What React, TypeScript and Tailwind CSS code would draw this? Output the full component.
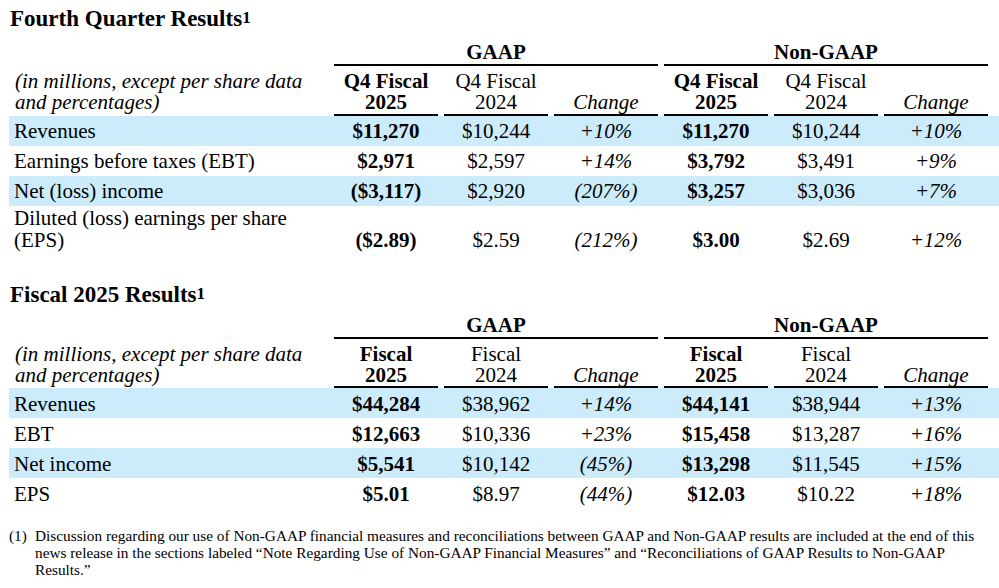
import React from "react";

type Row = {
  label: React.ReactNode;
  cells: string[];
  blue: boolean;
  tall?: boolean;
};

const q4Rows: Row[] = [
  { label: "Revenues", cells: ["$11,270", "$10,244", "+10%", "$11,270", "$10,244", "+10%"], blue: true },
  { label: "Earnings before taxes (EBT)", cells: ["$2,971", "$2,597", "+14%", "$3,792", "$3,491", "+9%"], blue: false },
  { label: "Net (loss) income", cells: ["($3,117)", "$2,920", "(207%)", "$3,257", "$3,036", "+7%"], blue: true },
  {
    label: (
      <>
        Diluted (loss) earnings per share
        <br />
        (EPS)
      </>
    ),
    cells: ["($2.89)", "$2.59", "(212%)", "$3.00", "$2.69", "+12%"],
    blue: false,
    tall: true,
  },
];

const fyRows: Row[] = [
  { label: "Revenues", cells: ["$44,284", "$38,962", "+14%", "$44,141", "$38,944", "+13%"], blue: true },
  { label: "EBT", cells: ["$12,663", "$10,336", "+23%", "$15,458", "$13,287", "+16%"], blue: false },
  { label: "Net income", cells: ["$5,541", "$10,142", "(45%)", "$13,298", "$11,545", "+15%"], blue: true },
  { label: "EPS", cells: ["$5.01", "$8.97", "(44%)", "$12.03", "$10.22", "+18%"], blue: false },
];

const cols = "grid grid-cols-[322px_repeat(6,110px)]";

// bold for current year, italic for change
function cellFont(i: number) {
  if (i === 0 || i === 3) return "font-bold";
  if (i === 2 || i === 5) return "italic";
  return "";
}

function Section({
  title,
  head,
  rows,
  gapTop,
  headH,
  headPb,
  labelPb,
  rowPad,
}: {
  title: string;
  head: string;
  rows: Row[];
  gapTop: string;
  headH: string;
  headPb: string;
  labelPb: string;
  rowPad: string;
}) {
  return (
    <section>
      <h2 className="pl-[1px] text-[23px] font-bold leading-[22px]">
        {title}
        <sup className="-top-[3px] text-[17px]">1</sup>
      </h2>

      {/* GAAP / Non-GAAP */}
      <div className={`${cols} ${gapTop} leading-[21px]`}>
        <div className="col-start-2 col-span-3 mx-[3px] border-b-2 border-black pb-[1px] text-center font-bold">
          GAAP
        </div>
        <div className="col-span-3 mx-[3px] border-b-2 border-black pb-[1px] text-center font-bold">
          Non-GAAP
        </div>
      </div>

      {/* column headers */}
      <div className={`${cols} ${headH} items-end leading-[21px]`}>
        <div className={`pl-[6px] italic ${labelPb}`}>
          (in millions, except per share data
          <br />
          and percentages)
        </div>
        {[0, 1, 2, 3, 4, 5].map((i) => (
          <div
            key={i}
            className={`mx-[3px] border-b-2 border-black text-center ${headPb} ${cellFont(i)}`}
          >
            {i === 2 || i === 5 ? (
              "Change"
            ) : (
              <>
                {head}
                <br />
                {i === 0 || i === 3 ? "2025" : "2024"}
              </>
            )}
          </div>
        ))}
      </div>

      {rows.map((r, idx) => (
        <div
          key={idx}
          className={`${cols} items-end ${
            r.tall ? "pt-[1px] pb-[4px] leading-[22px]" : `${rowPad} leading-[21px]`
          } ${r.blue ? "bg-[#ccebfb]" : ""}`}
        >
          <div className="pl-[5px]">{r.label}</div>
          {r.cells.map((c, i) => (
            <div key={i} className={`text-center ${cellFont(i)}`}>
              {c}
            </div>
          ))}
        </div>
      ))}
    </section>
  );
}

export default function App() {
  return (
    <main className="h-[588px] w-[999px] overflow-hidden bg-white pl-[9px] pt-[8px] font-['Liberation_Serif',serif] text-[21px] text-black">
      <Section
        title="Fourth Quarter Results"
        head="Q4 Fiscal"
        rows={q4Rows}
        gapTop="mt-[12px]"
        headH="h-[50px]"
        headPb="pb-[1px]"
        labelPb="pb-[3px]"
        rowPad="pt-[5px] pb-[4px]"
      />

      <div className="mt-[29px]">
        <Section
          title="Fiscal 2025 Results"
          head="Fiscal"
          rows={fyRows}
          gapTop="mt-[9px]"
          headH="h-[49px]"
          headPb="pb-0"
          labelPb="pb-[2px]"
          rowPad="pt-[6px] pb-[3px]"
        />
      </div>

      {/* Footnote */}
      <div className="mt-[19px] flex text-[15.3px] leading-[17px]">
        <div className="w-[26px] shrink-0">(1)</div>
        <div className="whitespace-nowrap">
          Discussion regarding our use of Non-GAAP financial measures and reconciliations between GAAP and Non-GAAP results are included at the end of this
          <br />
          news release in the sections labeled “Note Regarding Use of Non-GAAP Financial Measures” and “Reconciliations of GAAP Results to Non-GAAP
          <br />
          Results.”
        </div>
      </div>
    </main>
  );
}
